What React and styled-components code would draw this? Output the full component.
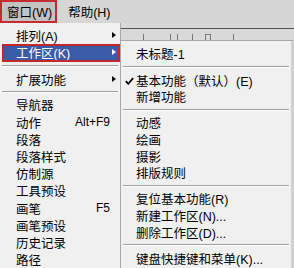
import React from "react";
import styled, { createGlobalStyle } from "styled-components";

const GlobalStyle = createGlobalStyle`
  html, body {
    margin: 0;
    padding: 0;
    background: #d4d4d4;
  }
  body {
    font-family: "Liberation Sans", "Noto Sans CJK SC", sans-serif;
    font-size: 12.5px;
    color: #000;
  }
`;

const mainItems = [
  { label: "排列(A)", arrow: true },
  { label: "工作区(K)", arrow: true, active: true },
  { sep: true },
  { label: "扩展功能", arrow: true },
  { sep: true },
  { label: "导航器" },
  { label: "动作", shortcut: "Alt+F9" },
  { label: "段落" },
  { label: "段落样式" },
  { label: "仿制源" },
  { label: "工具预设" },
  { label: "画笔", shortcut: "F5" },
  { label: "画笔预设" },
  { label: "历史记录" },
  { label: "路径" },
];

const subItems = [
  { label: "未标题-1" },
  { sep: true },
  { label: "基本功能（默认）(E)", checked: true },
  { label: "新增功能" },
  { sep: true },
  { label: "动感" },
  { label: "绘画" },
  { label: "摄影" },
  { label: "排版规则" },
  { sep: true },
  { label: "复位基本功能(R)" },
  { label: "新建工作区(N)..." },
  { label: "删除工作区(D)..." },
  { sep: true },
  { label: "键盘快捷键和菜单(K)..." },
];

export default function App() {
  return (
    <>
      <GlobalStyle />
      <Page>
        <MenuBar>
          <BarItem open>窗口(W)</BarItem>
          <BarItem>帮助(H)</BarItem>
        </MenuBar>
        <Body>
          <MainMenu>
            {mainItems.map((item, i) =>
              item.sep ? (
                <Separator key={i} height={8.5} />
              ) : (
                <MainRow key={i} active={item.active}>
                  <span>{item.label}</span>
                  {item.shortcut && <Shortcut>{item.shortcut}</Shortcut>}
                  {item.arrow && <Arrow active={item.active} />}
                </MainRow>
              )
            )}
          </MainMenu>
          <RightSide>
            <Ruler>
              <svg width="173" height="17" viewBox="0 0 173 17">
                <line x1="0" y1="5.5" x2="173" y2="5.5" stroke="#555" strokeWidth="1" />
                {[22, 49, 56, 71, 84, 89, 112].map((x) => (
                  <line key={x} x1={x + 0.5} y1="11" x2={x + 0.5} y2="17" stroke="#777" strokeWidth="1" />
                ))}
                <line x1="84" y1="11.5" x2="89" y2="11.5" stroke="#777" strokeWidth="1" />
              </svg>
            </Ruler>
            <SubMenu>
              {subItems.map((item, i) =>
                item.sep ? (
                  <Separator key={i} height={9.6} />
                ) : (
                  <SubRow key={i}>
                    {item.checked && (
                      <Check width="9" height="8" viewBox="0 0 9 8">
                        <path d="M0.8 4.2 L3.3 6.8 L8.2 1" fill="none" stroke="#000" strokeWidth="1.8" />
                      </Check>
                    )}
                    {item.label}
                  </SubRow>
                )
              )}
            </SubMenu>
          </RightSide>
        </Body>
      </Page>
    </>
  );
}

const Page = styled.div`
  width: 294px;
  height: 268px;
  overflow: hidden;
  background: #d4d4d4;
`;

const MenuBar = styled.div`
  display: flex;
  height: 23px;
  gap: 6px;
  background: #d6d6d6;
`;

const BarItem = styled.div`
  display: flex;
  align-items: center;
  height: 23px;
  box-sizing: border-box;
  padding: 0 3px 0 ${(p) => (p.open ? "5px" : "3px")};
  background: ${(p) => (p.open ? "#c2c2c2" : "transparent")};
  border: 2px solid ${(p) => (p.open ? "#c62b32" : "transparent")};
`;

const Body = styled.div`
  display: flex;
  height: 245px;
`;

const MainMenu = styled.div`
  width: 121px;
  box-sizing: border-box;
  padding-top: 3.6px;
  background: #f0f0f0;
  border-right: 1px solid #a8a8a8;
  display: flex;
  flex-direction: column;
`;

const MainRow = styled.div`
  position: relative;
  display: flex;
  align-items: center;
  justify-content: space-between;
  height: 17.2px;
  flex-shrink: 0;
  box-sizing: border-box;
  padding: 0 10px 0 16px;
  margin: ${(p) => (p.active ? "0 0 0 2px" : "0")};
  padding-left: ${(p) => (p.active ? "14px" : "16px")};
  ${(p) =>
    p.active &&
    `
    height: 18.4px;
    background: #3a5ba8;
    color: #fff;
    outline: 2px solid #c1272d;
    outline-offset: -2px;
  `}
`;

const Shortcut = styled.span`
  font-size: 12px;
`;

const Arrow = styled.span`
  position: absolute;
  right: 4px;
  top: 50%;
  margin-top: -3.5px;
  width: 0;
  height: 0;
  border-top: 3.5px solid transparent;
  border-bottom: 3.5px solid transparent;
  border-left: 4px solid ${(p) => (p.active ? "#fff" : "#000")};
`;

const Separator = styled.div`
  height: ${(p) => p.height}px;
  flex-shrink: 0;
  display: flex;
  align-items: center;
  padding: 0 2px;
  &::after {
    content: "";
    flex: 1;
    height: 0;
    border-top: 1px solid #a0a0a0;
    border-bottom: 1px solid #fff;
  }
`;

const RightSide = styled.div`
  flex: 1;
  display: flex;
  flex-direction: column;
`;

const Ruler = styled.div`
  height: 17px;
  background: #d8d8d8;
  line-height: 0;
`;

const SubMenu = styled.div`
  flex: 1;
  box-sizing: border-box;
  padding-top: 4.6px;
  background: #f0f0f0;
  border-top: 1px solid #a8a8a8;
  border-right: 3px solid #d0d0d0;
  display: flex;
  flex-direction: column;
`;

const SubRow = styled.div`
  position: relative;
  height: 16.6px;
  flex-shrink: 0;
  display: flex;
  align-items: center;
  padding-left: 15px;
`;

const Check = styled.svg`
  position: absolute;
  left: 4px;
  top: 5px;
`;
